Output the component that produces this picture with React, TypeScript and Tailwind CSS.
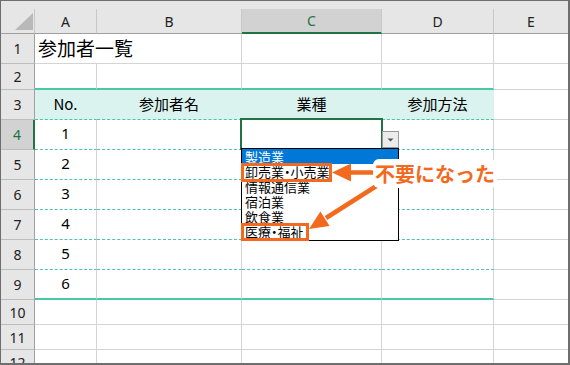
import React from 'react';

const jp = "font-['Noto_Sans_CJK_JP',sans-serif]";
const latin = "font-['Noto_Sans','Noto_Sans_CJK_JP',sans-serif]";

type Kind = 'plain' | 'title' | 'topline' | 'thead' | 'data' | 'last';

const widths = ['w-[62px]', 'w-[145px]', 'w-[140px]', 'w-[112px]', 'w-[74px]'];

const rows: { n: number; h: string; kind: Kind; no?: string }[] = [
  { n: 1, h: 'h-[30px]', kind: 'title' },
  { n: 2, h: 'h-[26px]', kind: 'topline' },
  { n: 3, h: 'h-[30px]', kind: 'thead' },
  { n: 4, h: 'h-[30px]', kind: 'data', no: '1' },
  { n: 5, h: 'h-[30px]', kind: 'data', no: '2' },
  { n: 6, h: 'h-[30px]', kind: 'data', no: '3' },
  { n: 7, h: 'h-[30px]', kind: 'data', no: '4' },
  { n: 8, h: 'h-[30px]', kind: 'data', no: '5' },
  { n: 9, h: 'h-[30px]', kind: 'last', no: '6' },
  { n: 10, h: 'h-[25px]', kind: 'plain' },
  { n: 11, h: 'h-[25px]', kind: 'plain' },
  { n: 12, h: 'h-[25px]', kind: 'plain' },
];

const headLabels = ['No.', '参加者名', '業種', '参加方法'];
const options = ['製造業', '卸売業・小売業', '情報通信業', '宿泊業', '飲食業', '医療・福祉'];

const cellClass = (kind: Kind, i: number) => {
  if (i === 4) return 'border-b border-[#d4d4d4]';
  switch (kind) {
    case 'title':
      return i === 0 ? 'border-b border-[#d4d4d4]' : 'border-r border-b border-[#d4d4d4]';
    case 'topline':
      return 'border-r border-b-2 border-r-[#d4d4d4] border-b-[#4bc6a6]';
    case 'thead':
      return 'bg-[#daf3ee] border-r border-b border-r-transparent border-b-[#4bc6a6] [border-bottom-style:dashed]';
    case 'data':
      return 'border-r border-b border-r-[#d4d4d4] border-b-[#4bc6a6] [border-bottom-style:dashed]';
    case 'last':
      return 'border-r border-b-2 border-r-[#d4d4d4] border-b-[#4bc6a6]';
    default:
      return 'border-r border-b border-[#d4d4d4]';
  }
};

const App: React.FC = () => {
  return (
    <div className="relative flex h-[365px] w-[570px] flex-col overflow-hidden border-t border-l border-r-2 border-b-2 border-[#6e6e6e] bg-white">
      {/* column header */}
      <div className="h-[8px] shrink-0 bg-[#e6e6e6]" />
      <div className={`flex h-[25px] shrink-0 bg-[#e6e6e6] text-[14px] text-[#222] ${latin}`}>
        <div className="relative w-[34px] shrink-0 border-r border-b border-r-[#c8c8c8] border-b-[#a0a0a0]">
          <svg className="absolute left-0 top-0" width="33" height="24">
            <polygon points="32,4 32,21 14,21" fill="#b9b9b9" />
          </svg>
        </div>
        {['A', 'B', 'C', 'D', 'E'].map((c, i) => (
          <div
            key={c}
            className={`${widths[i]} flex shrink-0 items-center justify-center ${
              c === 'C'
                ? 'border-r border-b-2 border-r-[#c8c8c8] border-b-[#217346] bg-[#d2d2d2] text-[#217346]'
                : i === 4
                ? 'border-b border-b-[#a0a0a0]'
                : 'border-r border-b border-r-[#c8c8c8] border-b-[#a0a0a0]'
            }`}
          >
            {c}
          </div>
        ))}
      </div>

      {/* body rows */}
      {rows.map((r) => (
        <div key={r.n} className={`flex shrink-0 ${r.h}`}>
          <div
            className={`flex w-[34px] shrink-0 items-center justify-center border-b border-b-[#bdbdbd] text-[14px] ${latin} ${
              r.n === 4
                ? 'border-r-2 border-r-[#217346] bg-[#d2d2d2] text-[#217346]'
                : 'border-r border-r-[#a0a0a0] bg-[#e6e6e6] text-[#222]'
            }`}
          >
            {r.n}
          </div>
          {widths.map((w, i) => (
            <div key={i} className={`${w} flex shrink-0 items-center ${cellClass(r.kind, i)}`}>
              {r.kind === 'title' && i === 0 && (
                <span className={`whitespace-nowrap pl-[3px] text-[19px] text-black ${jp}`}>参加者一覧</span>
              )}
              {r.kind === 'thead' && i < 4 && (
                <span className={`w-full text-center text-[15px] text-black ${jp}`}>{headLabels[i]}</span>
              )}
              {r.no && i === 0 && (
                <span className={`w-full pb-[2px] text-center text-[15px] text-black ${latin}`}>{r.no}</span>
              )}
            </div>
          ))}
        </div>
      ))}

      {/* selected cell C4 */}
      <div className="absolute left-[239px] top-[117px] h-[32px] w-[143px] border-2 border-[#217346]" />

      {/* dropdown button */}
      <div className="absolute left-[381px] top-[130px] h-[17px] w-[17px] border border-[#9a9a9a] bg-[#ececec]">
        <svg className="absolute left-0 top-0" width="15" height="15">
          <polygon points="4.5,6.5 10.5,6.5 7.5,9.5" fill="#555" />
        </svg>
      </div>

      {/* dropdown list */}
      <div
        className={`absolute left-[240px] top-[147px] h-[93px] w-[158px] border border-black bg-white text-[13px] leading-[15px] [font-feature-settings:'palt'] ${jp}`}
      >
        {options.map((o, i) => (
          <div
            key={o}
            className={i === 0 ? 'h-[15px] bg-[#0078d7] pl-[3px] text-white' : 'h-[15px] pl-[3px] text-black'}
          >
            {o}
          </div>
        ))}
      </div>

      {/* highlight boxes */}
      <div className="absolute left-[240px] top-[162px] h-[19px] w-[91px] border-[3px] border-[#f36a1f]" />
      <div className="absolute left-[240px] top-[222px] h-[18px] w-[68px] border-[3px] border-[#f36a1f]" />

      {/* arrows */}
      <svg className="pointer-events-none absolute -left-px -top-px" width="570" height="365">
        <line x1="348" y1="172.5" x2="380" y2="172.5" stroke="#f36a1f" strokeWidth="4.5" />
        <polygon points="332,172.5 351,163.5 351,181.5" fill="#f36a1f" />
        <line x1="378" y1="185" x2="326" y2="218" stroke="#f36a1f" strokeWidth="4.5" />
        <polygon points="309,229 329.6,225.9 320.4,211.5" fill="#f36a1f" />
      </svg>

      {/* callout label */}
      <div
        className={`absolute left-[372px] top-[158px] flex h-[29px] w-[124px] items-center justify-center rounded-md bg-white text-[20px] font-bold text-[#f36a1f] ${jp}`}
      >
        不要になった
      </div>
    </div>
  );
};

export default App;
